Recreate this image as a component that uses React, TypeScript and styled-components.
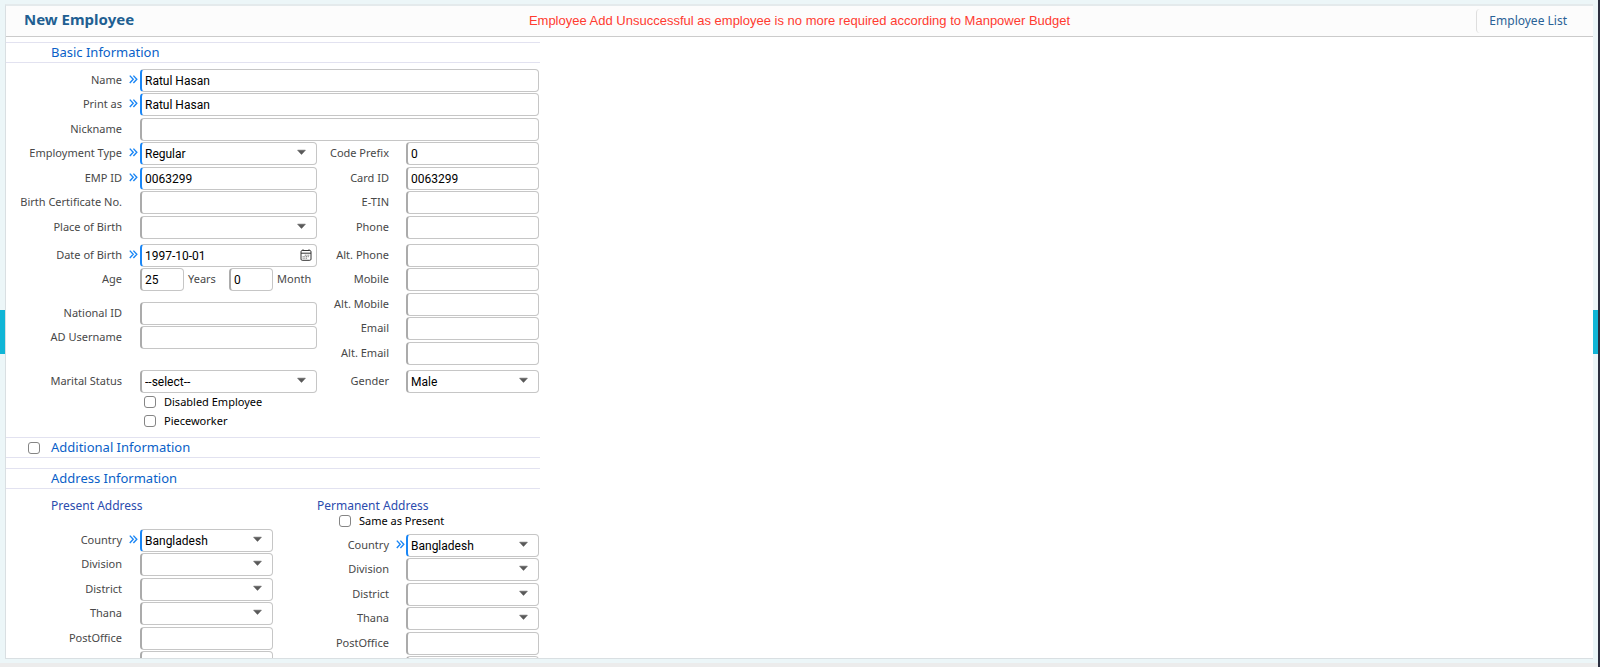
import React, { useId } from "react";
import styled, { createGlobalStyle } from "styled-components";

const GlobalStyle = createGlobalStyle`
  *, *::before, *::after { box-sizing: border-box; }
  body {
    margin: 0;
    background: #ececec;
    color: #000;
    font-family: "Noto Sans", "Open Sans", sans-serif;
    font-size: 11px;
  }
  button { font-family: inherit; }
`;

const Viewport = styled.div`
  display: flex;
  flex-direction: column;
  height: 100vh;
  padding-bottom: 4px;
  border-right: 2px solid #2b2f3f;
`;

const Shell = styled.div`
  flex: 1;
  min-height: 0;
  display: grid;
  grid-template-columns: 5px minmax(0, 1fr) 5px;
  align-items: center;
  background: #ecf6f8;
`;

const EdgeTab = styled.button`
  height: 44px;
  padding: 0;
  border: 0;
  background: #10b5d6;
  cursor: pointer;
`;

const Panel = styled.main`
  align-self: stretch;
  min-height: 0;
  display: flex;
  flex-direction: column;
  margin: 4px 0;
  border: 1px solid #d9dfe2;
  border-top: 2px solid #e4eaec;
  border-right: 0;
  background: #fff;
`;

const Header = styled.header`
  flex: none;
  display: grid;
  grid-template-columns: 1fr auto 1fr;
  align-items: center;
  height: 31px;
  background: #fcfcfc;
  border-bottom: 1px solid #cbcbcb;
`;

const Title = styled.h1`
  margin: 0 0 4px;
  padding-left: 18px;
  font-size: 15px;
  line-height: 20px;
  font-weight: 700;
  color: #215f92;
`;

const Message = styled.p`
  margin: 0;
  font-family: "Liberation Sans", sans-serif;
  font-size: 13px;
  line-height: 20px;
  color: #ff3b30;
`;

const ListLink = styled.a`
  justify-self: end;
  padding: 0 26px 0 12px;
  border-left: 1px solid #dedede;
  border-radius: 4px 0 0 4px;
  font-size: 12px;
  line-height: 24px;
  color: #2a6296;
  text-decoration: none;
`;

const Scroller = styled.div`
  flex: 1;
  min-height: 0;
  overflow-y: auto;
  scrollbar-width: none;
`;

const Form = styled.form`
  max-width: 534px;
  padding-top: 5px;
`;

const SectionBar = styled.div<{ $gap?: number }>`
  display: grid;
  grid-template-columns: 45px 1fr;
  align-items: center;
  height: 21px;
  margin-top: ${(p) => p.$gap ?? 0}px;
  border: solid #e2e2f0;
  border-width: 1px 0;
`;

const SectionTitle = styled.h2`
  grid-column: 2;
  margin: 0;
  font-size: 13px;
  line-height: 19px;
  font-weight: 400;
  color: #0a5fc8;
`;

const SubTitle = styled.h3`
  margin: 0;
  font-size: 12px;
  line-height: 16px;
  font-weight: 400;
  color: #2b4cae;
`;

const Group = styled.div<{ $gap?: number }>`
  margin-top: ${(p) => p.$gap ?? 0}px;
`;

const Columns = styled.div`
  display: grid;
  grid-template-columns: minmax(0, 1fr) 223px;
`;

const Row = styled.div<{ $side?: boolean }>`
  display: grid;
  grid-template-columns: ${(p) => (p.$side ? "72px 17px" : "116px 18px")} minmax(0, 1fr);
  align-items: center;
  height: 24px;
  padding-right: 1px;
`;

const Label = styled.label`
  padding-bottom: 1px;
  text-align: right;
  white-space: nowrap;
  line-height: 20px;
  color: #484848;
`;

const Mark = styled.svg`
  display: block;
  width: 9px;
  height: 9px;
  margin: 0 0 2px 7px;
`;

const Control = styled.div<{ $width?: number }>`
  grid-column: 3;
  display: grid;
  align-items: center;
  width: ${(p) => (p.$width ? `${p.$width}px` : "100%")};

  > * { grid-area: 1 / 1; }
  > svg {
    justify-self: end;
    margin-right: 11px;
    margin-bottom: 2px;
    pointer-events: none;
  }
`;

const fieldStyle = (required?: boolean) => `
  width: 100%;
  height: 23px;
  padding: 1px 3px 0;
  border: 1px solid #c6c6c6;
  border-left: 2px solid ${required ? "#1a86f5" : "#ababab"};
  border-radius: 4px;
  background: #fff;
  color: #000;
  font-family: Roboto, "Noto Sans", sans-serif;
  font-size: 12px;
  outline: 0;
`;

const Input = styled.input<{ $required?: boolean }>`
  ${(p) => fieldStyle(p.$required)}
`;

const Select = styled.select<{ $required?: boolean }>`
  ${(p) => fieldStyle(p.$required)}
  appearance: none;
`;

const AgeRow = styled.div`
  grid-column: 3;
  display: grid;
  grid-template-columns: 44px 45px 44px 1fr;
  align-items: center;
`;

const Unit = styled.span`
  padding: 0 0 2px 4px;
  color: #484848;
`;

const CheckLine = styled.div<{ $indent: number; $height: number }>`
  display: flex;
  align-items: center;
  gap: 8px;
  height: ${(p) => p.$height}px;
  padding-left: ${(p) => p.$indent}px;
`;

const CheckLabel = styled.label`
  line-height: 16px;
  color: #000;
`;

const Check = styled.input.attrs({ type: "checkbox" })`
  appearance: none;
  flex: none;
  width: 12px;
  height: 12px;
  margin: 0;
  border: 1px solid #858585;
  border-radius: 3px;
  background: #fff;

  &:checked { background: #1a86f5; border-color: #1a86f5; }
`;

const SectionCheck = styled(Check)`
  margin-left: 22px;
`;

const RequiredMark = () => (
  <Mark viewBox="0 0 9 9" fill="none" stroke="#1a86f5" strokeWidth="1.4" aria-hidden="true">
    <path d="M0.8 0.6 4.2 4.3 0.8 8M4.4 0.6 7.8 4.3 4.4 8" />
  </Mark>
);

const Caret = () => (
  <svg width="9" height="7" viewBox="0 0 9 7" aria-hidden="true">
    <path d="M0.6 1.2h7.8L4.5 5.4z" fill="#5a5a5a" stroke="#5a5a5a" strokeWidth="0.6" strokeLinejoin="round" />
  </svg>
);

const CalendarSvg = styled.svg`
  && {
    margin: 0 5px 0 0;
  }
`;

const CalendarIcon = () => (
  <CalendarSvg width="12" height="12" viewBox="0 0 12 12" fill="none" aria-hidden="true">
    <rect x="1" y="1.5" width="10" height="9.8" rx="1.2" stroke="#333" />
    <path d="M1 4.2h10M3 .3v1.5M9 .3v1.5" stroke="#333" />
    <path d="M4.8 6.2h4.6M2.6 7.7h6.8M2.6 9.2h4.6" stroke="#777" strokeDasharray="1.1 .6" />
  </CalendarSvg>
);

type FieldProps = {
  label: string;
  hideLabel?: boolean;
  value?: string;
  kind?: "text" | "select" | "date";
  required?: boolean;
  side?: boolean;
  width?: number;
};

const Field = ({ label, hideLabel, value = "", kind = "text", required, side, width }: FieldProps) => {
  const id = useId();
  return (
    <Row $side={side}>
      {!hideLabel && <Label htmlFor={id}>{label}</Label>}
      {required && <RequiredMark />}
      <Control $width={width}>
        {kind === "select" ? (
          <Select id={id} defaultValue={value} $required={required}>
            <option value={value}>{value}</option>
          </Select>
        ) : (
          <Input
            id={id}
            type="text"
            defaultValue={value}
            aria-label={hideLabel ? label : undefined}
            $required={required}
          />
        )}
        {kind === "select" && <Caret />}
        {kind === "date" && <CalendarIcon />}
      </Control>
    </Row>
  );
};

const LEFT = 177;
const SMALL = 133;

const AddressFields = ({ side }: { side?: boolean }) => (
  <>
    <Group>
      <Field label="Country" kind="select" value="Bangladesh" required side={side} width={SMALL} />
      <Field label="Division" kind="select" side={side} width={SMALL} />
    </Group>
    <Group $gap={1}>
      <Field label="District" kind="select" side={side} width={SMALL} />
      <Field label="Thana" kind="select" side={side} width={SMALL} />
    </Group>
    <Group $gap={1}>
      <Field label="PostOffice" side={side} width={SMALL} />
      <Field label="Post Code" hideLabel side={side} width={SMALL} />
    </Group>
  </>
);

export default function App() {
  return (
    <Viewport>
      <GlobalStyle />
      <Shell>
        <EdgeTab type="button" aria-label="Previous" />
        <Panel>
          <Header>
            <Title>New Employee</Title>
            <Message role="alert">
              Employee Add Unsuccessful as employee is no more required according to Manpower Budget
            </Message>
            <ListLink href="#list">Employee List</ListLink>
          </Header>
          <Scroller>
            <Form>
              <SectionBar>
                <SectionTitle>Basic Information</SectionTitle>
              </SectionBar>
              <Group $gap={5}>
                <Field label="Name" value="Ratul Hasan" required />
                <Field label="Print as" value="Ratul Hasan" required />
              </Group>
              <Group $gap={1}>
                <Field label="Nickname" />
              </Group>
              <Columns>
                <div>
                  <Field label="Employment Type" kind="select" value="Regular" required width={LEFT} />
                  <Group $gap={1}>
                    <Field label="EMP ID" value="0063299" required width={LEFT} />
                    <Field label="Birth Certificate No." width={LEFT} />
                  </Group>
                  <Group $gap={1}>
                    <Field label="Place of Birth" kind="select" width={LEFT} />
                  </Group>
                  <Group $gap={4}>
                    <Field label="Date of Birth" kind="date" value="1997-10-01" required width={LEFT} />
                    <Row>
                      <Label htmlFor="age-years">Age</Label>
                      <AgeRow>
                        <Input id="age-years" defaultValue="25" />
                        <Unit>Years</Unit>
                        <Input aria-label="Months" defaultValue="0" />
                        <Unit>Month</Unit>
                      </AgeRow>
                    </Row>
                  </Group>
                  <Group $gap={10}>
                    <Field label="National ID" width={LEFT} />
                    <Field label="AD Username" width={LEFT} />
                  </Group>
                </div>
                <div>
                  <Field label="Code Prefix" value="0" side />
                  <Group $gap={1}>
                    <Field label="Card ID" value="0063299" side />
                    <Field label="E-TIN" side />
                  </Group>
                  <Group $gap={1}>
                    <Field label="Phone" side />
                  </Group>
                  <Group $gap={4}>
                    <Field label="Alt. Phone" side />
                    <Field label="Mobile" side />
                  </Group>
                  <Group $gap={1}>
                    <Field label="Alt. Mobile" side />
                    <Field label="Email" side />
                  </Group>
                  <Group $gap={1}>
                    <Field label="Alt. Email" side />
                  </Group>
                </div>
              </Columns>
              <Group $gap={4}>
                <Columns>
                  <Field label="Marital Status" kind="select" value="--select--" width={LEFT} />
                  <Field label="Gender" kind="select" value="Male" side />
                </Columns>
                <CheckLine $indent={138} $height={17}>
                  <Check id="disabled-employee" />
                  <CheckLabel htmlFor="disabled-employee">Disabled Employee</CheckLabel>
                </CheckLine>
                <CheckLine $indent={138} $height={21}>
                  <Check id="pieceworker" />
                  <CheckLabel htmlFor="pieceworker">Pieceworker</CheckLabel>
                </CheckLine>
              </Group>
              <SectionBar $gap={6}>
                <SectionCheck aria-label="Additional Information" />
                <SectionTitle>Additional Information</SectionTitle>
              </SectionBar>
              <SectionBar $gap={10}>
                <SectionTitle>Address Information</SectionTitle>
              </SectionBar>
              <Group $gap={9}>
                <Columns>
                  <CheckLine $indent={45} $height={16}>
                    <SubTitle>Present Address</SubTitle>
                  </CheckLine>
                  <SubTitle>Permanent Address</SubTitle>
                </Columns>
                <Columns>
                  <Group $gap={14}>
                    <AddressFields />
                  </Group>
                  <div>
                    <CheckLine $indent={22} $height={14}>
                      <Check id="same-address" />
                      <CheckLabel htmlFor="same-address">Same as Present</CheckLabel>
                    </CheckLine>
                    <Group $gap={5}>
                      <AddressFields side />
                    </Group>
                  </div>
                </Columns>
              </Group>
            </Form>
          </Scroller>
        </Panel>
        <EdgeTab type="button" aria-label="Next" />
      </Shell>
    </Viewport>
  );
}
